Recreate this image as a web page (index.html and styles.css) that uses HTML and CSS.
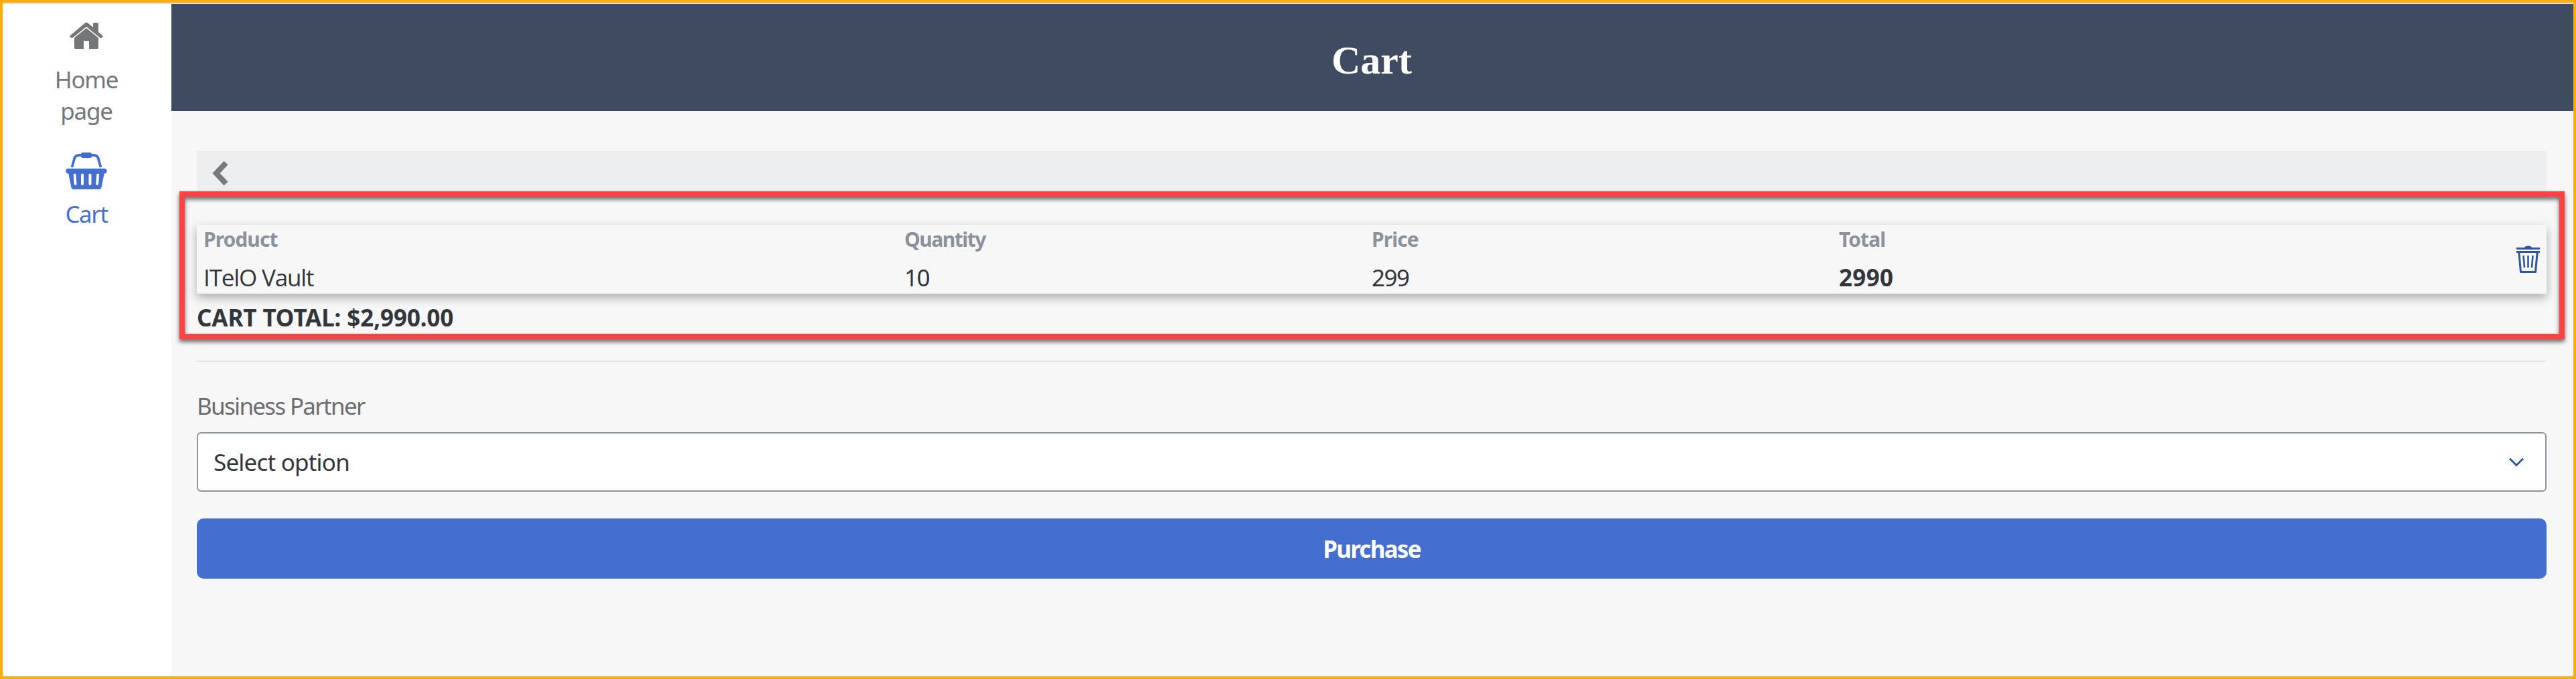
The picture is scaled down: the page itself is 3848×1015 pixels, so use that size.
FILE: index.html
```html
<!DOCTYPE html>
<html lang="en">
<head>
<meta charset="utf-8">
<title>Cart</title>
<link rel="stylesheet" href="styles.css">
</head>
<body>
<div class="app">
  <nav class="sidebar">
    <a class="nav-item">
      <svg class="icon-home" viewBox="0 0 50 42" fill="currentColor">
        <path d="M35 2.500q0-1.500 1.500-1.500h5q1.500 0 1.500 1.500V15l6 5q1.300 1.200 0 2.500l-1 1q-1.200 1.200-2.600 0L25 7 4.600 23.500q-1.400 1.200-2.600 0l-1-1q-1.300-1.300 0-2.500L22.800 1.500q2.200-1.900 4.400 0L35 7.800z"/>
        <path d="M25 9 43 23.500V38.500Q43 40 41.500 40H29V28h-8v12H8.500Q7 40 7 38.500V23.500z"/>
      </svg>
      <span class="nav-text nav-home">Home</span>
      <span class="nav-text nav-page">page</span>
    </a>
    <a class="nav-item active">
      <svg class="icon-basket" viewBox="0 0 64 56" fill="none" stroke="currentColor">
        <path d="M10.500 22 14 9.500Q15.500 4 21 4h22q5.500 0 7 5.500L53.500 22" stroke-width="3.800"/>
        <rect x="24" y="0" width="16" height="8" rx="2.500" fill="currentColor" stroke="none"/>
        <path fill="currentColor" stroke="none" fill-rule="evenodd" d="M4.500 24h55a3.800 3.800 0 0 1 0 7.500h-.8l-4 20Q54 55 51 55H13Q10 55 9.300 51.500l-4-20h-.8a3.800 3.800 0 0 1 0-7.500zM12.700 33.500l1 13.500a1.900 1.900 0 0 0 3.800-.3l-1-13.400a1.900 1.900 0 0 0-3.800.2zM24 33.500V47a2 2 0 0 0 4 0V33.500a2 2 0 0 0-4 0zM35.500 33.500V47a2 2 0 0 0 4 0V33.500a2 2 0 0 0-4 0zM47.300 33.300l-1 13.400a1.900 1.900 0 0 0 3.800.3l1-13.500a1.900 1.900 0 0 0-3.800-.2z"/>
      </svg>
      <span class="nav-text nav-cart">Cart</span>
    </a>
  </nav>
  <main class="main">
    <header class="header"><h1 class="title">Cart</h1></header>
    <div class="content">
      <div class="toolbar">
        <svg class="icon-back" viewBox="0 0 26 38" fill="none" stroke="currentColor" stroke-width="8.200" stroke-linejoin="miter"><path d="M21.500 3.500 7 19l14.500 15.500"/></svg>
      </div>
      <div class="card">
        <div class="cell"><span class="label l-product">Product</span><span class="value v-product">ITelO Vault</span></div>
        <div class="cell"><span class="label l-quantity">Quantity</span><span class="value v-num">10</span></div>
        <div class="cell"><span class="label">Price</span><span class="value v-num">299</span></div>
        <div class="cell"><span class="label">Total</span><span class="value v-total">2990</span></div>
        <svg class="icon-trash" viewBox="0 0 35 42" fill="none" stroke="currentColor">
          <path d="M0 4.500h35M0 9.500h35" stroke-width="3"/>
          <path d="M11.500 3.500Q13 .5 17.500.5t6 3z" fill="currentColor" stroke="none"/>
          <path d="M3.800 10 6.500 39.500h22L31.200 10" stroke-width="3" stroke-linejoin="round"/>
          <path d="M10.500 15l1.500 18M17.500 15v18M24.500 15 23 33" stroke-width="2.600"/>
        </svg>
      </div>
      <div class="cart-total">CART TOTAL: $2,990.00</div>
      <hr class="divider">
      <label class="field-label">Business Partner</label>
      <div class="select">
        <span class="select-text">Select option</span>
        <svg class="icon-down" viewBox="0 0 22 14" fill="none" stroke="currentColor" stroke-width="3"><path d="M1 1.500 11 11.500 21 1.500"/></svg>
      </div>
      <button class="purchase">Purchase</button>
    </div>
  </main>
</div>
<div class="highlight"></div>
</body>
</html>
```

FILE: styles.css
```css
* { box-sizing: border-box; }

body {
  margin: 0;
  font-family: "Noto Sans", "Open Sans", sans-serif;
  font-size: 35px;
  line-height: 47px;
  color: #32363a;
}

svg { display: block; flex: none; }

.app {
  display: flex;
  height: 1015px;
  border: 4px solid #faad0b;
  background: #f7f7f7;
}

.sidebar {
  width: 252px;
  flex: none;
  padding-right: 2px;
  background: #fff;
  border-top: 2px solid #dcdee1;
}

.nav-item {
  display: flex;
  flex-direction: column;
  align-items: center;
  color: #74777a;
}

.nav-item.active { color: #446fd1; }

.icon-home { width: 50px; height: 42px; margin: 27px 0 20px; }
.icon-basket { width: 64px; height: 56px; margin: 39px 0 12px; }

.nav-text { height: 47px; }
.nav-home { letter-spacing: -1.3px; }
.nav-page { letter-spacing: -1.2px; }
.nav-cart { letter-spacing: -1.4px; }

.main {
  flex: 1;
  border-top: 2px solid #dcdee1;
}

.header {
  display: flex;
  align-items: center;
  justify-content: center;
  height: 160px;
  background: #3f4b61;
}

.title {
  margin: 8px 2px 0 0;
  font: bold 60px/68px "Liberation Serif", serif;
  color: #fff;
}

.content {
  display: flex;
  flex-direction: column;
  padding: 60px 40px 0 38px;
}

.toolbar {
  height: 70px;
  padding: 14px 0 0 22px;
  background: #edeef0;
  color: #77797c;
}

.icon-back { width: 26px; height: 38px; }

.card {
  display: grid;
  grid-template-columns: 1047px 698px 698px 1fr auto;
  align-items: center;
  height: 103px;
  margin-top: 40px;
  padding: 0 10px;
  background: #f7f7f7;
  box-shadow: 0 6px 14px rgba(0, 0, 0, .3);
}

.cell {
  display: flex;
  flex-direction: column;
  gap: 11px;
}

.label {
  font-size: 30px;
  font-weight: 700;
  line-height: 43px;
  letter-spacing: -.95px;
  color: #8c929c;
}

.l-quantity { letter-spacing: -1.5px; }

.value { line-height: 49px; }
.v-product { font-family: "Open Sans", sans-serif; letter-spacing: -1.15px; }
.v-num { letter-spacing: -1.5px; }
.v-total { font-weight: 700; letter-spacing: .3px; }

.icon-trash { width: 35px; height: 42px; color: #3155a4; }

.cart-total {
  margin-top: 12px;
  font-weight: 700;
  letter-spacing: -.1px;
}

.divider {
  width: 100%;
  height: 2px;
  margin: 41px 0 42px;
  border: 0;
  background: #e5e5e5;
}

.field-label {
  color: #6a6d70;
  letter-spacing: -1.7px;
}

.select {
  display: flex;
  align-items: center;
  justify-content: space-between;
  height: 89px;
  margin-top: 16px;
  padding: 0 32px 0 23px;
  border: 2px solid #8c919b;
  border-radius: 6px;
  background: #fff;
}

.select-text { letter-spacing: -.8px; }
.icon-down { width: 22px; height: 14px; color: #3155a4; }

.purchase {
  height: 90px;
  margin-top: 40px;
  padding: 0;
  border: 0;
  border-radius: 10px;
  background: #446fd1;
  color: #fff;
  font: inherit;
  font-weight: 700;
  letter-spacing: -1.75px;
}

/* Callout frame drawn over the cart rows */
.highlight {
  position: absolute;
  left: 268px;
  top: 286px;
  width: 3563px;
  height: 221px;
  border: 8px solid #ff4242;
  filter: drop-shadow(0 4px 3px rgba(0, 0, 0, .6));
}
```
